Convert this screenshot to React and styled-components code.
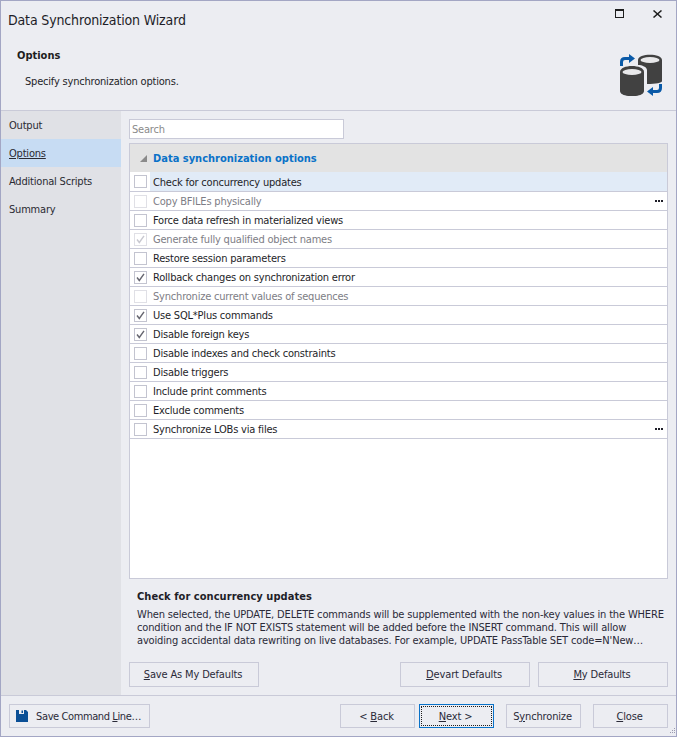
import React from 'react';
import styled, { createGlobalStyle } from 'styled-components';

const Global = createGlobalStyle`
  html, body { margin: 0; padding: 0; background: #ecedf2; }
  * { box-sizing: border-box; }
`;
const FONT = `"DejaVu Sans Condensed", "DejaVu Sans", sans-serif`;

const Window = styled.div`
  width: 677px; height: 737px; display: flex; flex-direction: column;
  background: #ecedf2; border: 1px solid #a3a6c4;
  font-family: ${FONT}; font-size: 11px; letter-spacing: -0.2px; color: #1e1e1e; position: relative; overflow: hidden;
`;
const TitleBar = styled.div`
  height: 37px; flex: none; display: flex; align-items: center; justify-content: space-between;
  padding: 0 14px 0 7px;
`;
const Title = styled.div`font-size: 14px; letter-spacing: -0.15px; color: #1e1e28;`;
const WinButtons = styled.div`display: flex; gap: 29px; align-items: center; margin-top: -12px;`;
const Header = styled.div`
  height: 73px; flex: none; display: flex; justify-content: space-between;
  border-bottom: 1px solid #c9cad8; padding: 9px 14px 0 16px;
`;
const HeaderTitle = styled.div`font-weight: 700; letter-spacing: 0; line-height: 18px;`;
const HeaderSub = styled.div`margin: 8px 0 0 8px; line-height: 18px; color: #1e1e28;`;
const Logo = styled.svg`margin-top: 7px; flex: none;`;
const Body = styled.div`flex: 1; min-height: 0; display: flex;`;
const Side = styled.div`width: 120px; flex: none; background: #e0e1e6;`;
const NavItem = styled.div`
  height: 28px; display: flex; align-items: center; padding-left: 8px; color: #2a2a32;
  background: ${p => (p.$active ? '#c7dcf3' : 'transparent')};
  text-decoration: ${p => (p.$active ? 'underline' : 'none')};
`;
const Main = styled.div`flex: 1; min-width: 0; display: flex; flex-direction: column; padding: 8px;`;
const Search = styled.div`
  width: 215px; height: 20px; flex: none; background: #fff; border: 1px solid #c9cad8;
  color: #8a8a8a; padding: 1px 0 0 2px; line-height: 18px;
`;
const Grid = styled.div`
  margin-top: 4px; height: 436px; flex: none; background: #fff; border: 1px solid #c9cad8;
`;
const GroupHead = styled.div`
  height: 28px; background: #e3e3e3; display: flex; align-items: center; padding-left: 10px; gap: 6px;
  font-weight: 700; letter-spacing: 0; color: #0a72c8;
`;
const Row = styled.div`
  height: ${p => (p.$first ? 20 : 19)}px; display: flex; align-items: center; padding-left: 4px; border-bottom: 1px solid #c9cad8;
  position: relative; color: ${p => (p.$off ? '#7d7d85' : '#1e1e28')};
`;
const Box = styled.div`
  width: 13px; height: 13px; flex: none; background: #fff;
  border: 1px solid ${p => (p.$off ? '#e0e0e6' : '#c3c4d0')};
  display: flex; align-items: center; justify-content: center;
`;
const RowLabel = styled.div`
  flex: 1; align-self: stretch; margin-left: 3px; line-height: 18px;
  padding: ${p => (p.$sel ? 2 : 1)}px 0 0 3px;
  display: flex; align-items: center;
  background: ${p => (p.$sel ? '#e1ebf7' : 'transparent')};
`;
const Dots = styled.div`
  position: absolute; right: 4px; top: 8px; display: flex; gap: 1px;
  & > i { width: 2px; height: 2px; background: #1e1e28; display: block; }
`;
const Desc = styled.div`padding: 9px 8px 0 8px; height: 83px; flex: none;`;
const DescTitle = styled.div`font-weight: 700; letter-spacing: 0.05px; line-height: 18px; color: #1e1e28;`;
const DescText = styled.div`line-height: 13px; margin-top: 2px; letter-spacing: -0.15px; color: #2a2a38; white-space: nowrap;`;
const Actions = styled.div`display: flex; align-items: flex-start;`;
const Spacer = styled.div`flex: 1;`;
const Btn = styled.div`
  width: ${p => p.$w}px; height: ${p => p.$h || 25}px; flex: none; margin-left: ${p => p.$ml || 0}px;
  display: flex; align-items: center; justify-content: center; gap: 8px; position: relative;
  padding-right: 2px; letter-spacing: ${p => (p.$tight ? -0.4 : -0.15)}px;
  border: 1px solid ${p => (p.$focus ? '#0a72c8' : '#c9cad8')}; color: #2a2a38;
  & u { text-underline-offset: 1px; }
`;
const FocusRing = styled.div`
  position: absolute; inset: 1px; border: 1px dotted #1e1e1e; pointer-events: none;
`;
const Footer = styled.div`
  height: 41px; flex: none; border-top: 1px solid #c9cad8; display: flex; align-items: flex-start; padding: 8px 8px 0;
`;
const Grip = styled.svg`position: absolute; right: 0; bottom: 0;`;
const CheckWrap = styled.span`display: flex; color: ${p => (p.$off ? '#c8c8d0' : '#666670')};`;

const Check = () => (
  <svg width="11" height="11" viewBox="0 0 11 11"><path d="M2 5.5 L4.3 8.5 L9 1.8" fill="none" stroke="currentColor" strokeWidth="1.4" /></svg>
);
const items = [
  { t: 'Check for concurrency updates', sel: 1 },
  { t: 'Copy BFILEs physically', off: 1, dots: 1 },
  { t: 'Force data refresh in materialized views' },
  { t: 'Generate fully qualified object names', off: 1, ch: 1 },
  { t: 'Restore session parameters' },
  { t: 'Rollback changes on synchronization error', ch: 1 },
  { t: 'Synchronize current values of sequences', off: 1 },
  { t: 'Use SQL*Plus commands', ch: 1 },
  { t: 'Disable foreign keys', ch: 1 },
  { t: 'Disable indexes and check constraints' },
  { t: 'Disable triggers' },
  { t: 'Include print comments' },
  { t: 'Exclude comments' },
  { t: 'Synchronize LOBs via files', dots: 1 },
];

const DbIcon = () => (
  <Logo width="42" height="42" viewBox="0 0 42 42">
    <path d="M18 6 C18 -1 42 -1 42 6 V27 C42 29 36 30 27 30 V16 C27 13 22 11 18 11 Z" fill="#414141" />
    <ellipse cx="30" cy="6" rx="9.5" ry="3" fill="#e8e8ea" />
    <path d="M0 18 C0 10 24 10 24 18 V37 C24 44 0 44 0 37 Z" fill="#414141" />
    <ellipse cx="12" cy="18" rx="9.5" ry="3" fill="#e8e8ea" />
    <path d="M1.5 12 V8 C1.5 5.5 3 4.5 5 4.5 H10" fill="none" stroke="#0a5aa8" strokeWidth="3" />
    <path d="M9 0 L15 4.5 L9 9 Z" fill="#0a5aa8" />
    <path d="M40.5 30 V34 C40.5 36.5 39 37.5 37 37.5 H32" fill="none" stroke="#0a5aa8" strokeWidth="3" />
    <path d="M33 33 L27 37.5 L33 42 Z" fill="#0a5aa8" />
  </Logo>
);

export default function App() {
  return (
    <Window>
      <Global />
      <TitleBar>
        <Title>Data Synchronization Wizard</Title>
        <WinButtons>
          <svg width="9" height="9" viewBox="0 0 9 9"><rect x=".5" y=".5" width="8" height="8" fill="none" stroke="#1e1e1e" /><rect x="0" y="0" width="9" height="2" fill="#1e1e1e" /></svg>
          <svg width="9" height="8" viewBox="0 0 9 8"><path d="M.5 .5 L8.5 7.5 M8.5 .5 L.5 7.5" stroke="#1e1e1e" strokeWidth="1.5" /></svg>
        </WinButtons>
      </TitleBar>
      <Header>
        <div>
          <HeaderTitle>Options</HeaderTitle>
          <HeaderSub>Specify synchronization options.</HeaderSub>
        </div>
        <DbIcon />
      </Header>
      <Body>
        <Side>
          <NavItem>Output</NavItem>
          <NavItem $active>Options</NavItem>
          <NavItem>Additional Scripts</NavItem>
          <NavItem>Summary</NavItem>
        </Side>
        <Main>
          <Search>Search</Search>
          <Grid>
            <GroupHead>
              <svg width="7" height="7" viewBox="0 0 7 7"><path d="M7 0 V7 H0 Z" fill="#8a8a8a" /></svg>
              Data synchronization options
            </GroupHead>
            {items.map((it, i) => (
              <Row key={it.t} $off={it.off} $first={i === 0}>
                <Box $off={it.off}>{it.ch && <CheckWrap $off={it.off}><Check /></CheckWrap>}</Box>
                <RowLabel $sel={it.sel}>{it.t}</RowLabel>
                {it.dots && <Dots><i /><i /><i /></Dots>}
              </Row>
            ))}
          </Grid>
          <Desc>
            <DescTitle>Check for concurrency updates</DescTitle>
            <DescText>
              When selected, the UPDATE, DELETE commands will be supplemented with the non-key values in the WHERE<br />
              condition and the IF NOT EXISTS statement will be added before the INSERT command. This will allow<br />
              avoiding accidental data rewriting on live databases. For example, UPDATE PassTable SET code=N'New…
            </DescText>
          </Desc>
          <Actions>
            <Btn $w={130}><span><u>S</u>ave As My Defaults</span></Btn>
            <Spacer />
            <Btn $w={130}><span><u>D</u>evart Defaults</span></Btn>
            <Btn $w={130} $ml={8}><span><u>M</u>y Defaults</span></Btn>
          </Actions>
        </Main>
      </Body>
      <Footer>
        <Btn $w={141} $h={24} $tight>
          <svg width="12" height="12" viewBox="0 0 12 12"><path d="M0 0 H3 V4 H8 V0 H10 L12 2 V12 H0 Z" fill="#0a4f96" /><rect x="5.5" y="0.5" width="1.5" height="2.5" fill="#0a4f96" /></svg>
          <span>Save Command <u>L</u>ine…</span>
        </Btn>
        <Spacer />
        <Btn $w={75} $h={24}><span>&lt; <u>B</u>ack</span></Btn>
        <Btn $w={75} $h={24} $ml={4} $focus><FocusRing /><span><u>N</u>ext &gt;</span></Btn>
        <Btn $w={75} $h={24} $ml={12}><span>S<u>y</u>nchronize</span></Btn>
        <Btn $w={75} $h={24} $ml={12}><span><u>C</u>lose</span></Btn>
      </Footer>
      <Grip width="8" height="8" viewBox="0 0 8 8"><g fill="#9a9ab0"><rect x="6" y="0" width="1" height="1"/><rect x="4" y="2" width="1" height="1"/><rect x="6" y="2" width="1" height="1"/><rect x="2" y="4" width="1" height="1"/><rect x="4" y="4" width="1" height="1"/><rect x="6" y="4" width="1" height="1"/></g></Grip>
    </Window>
  );
}
